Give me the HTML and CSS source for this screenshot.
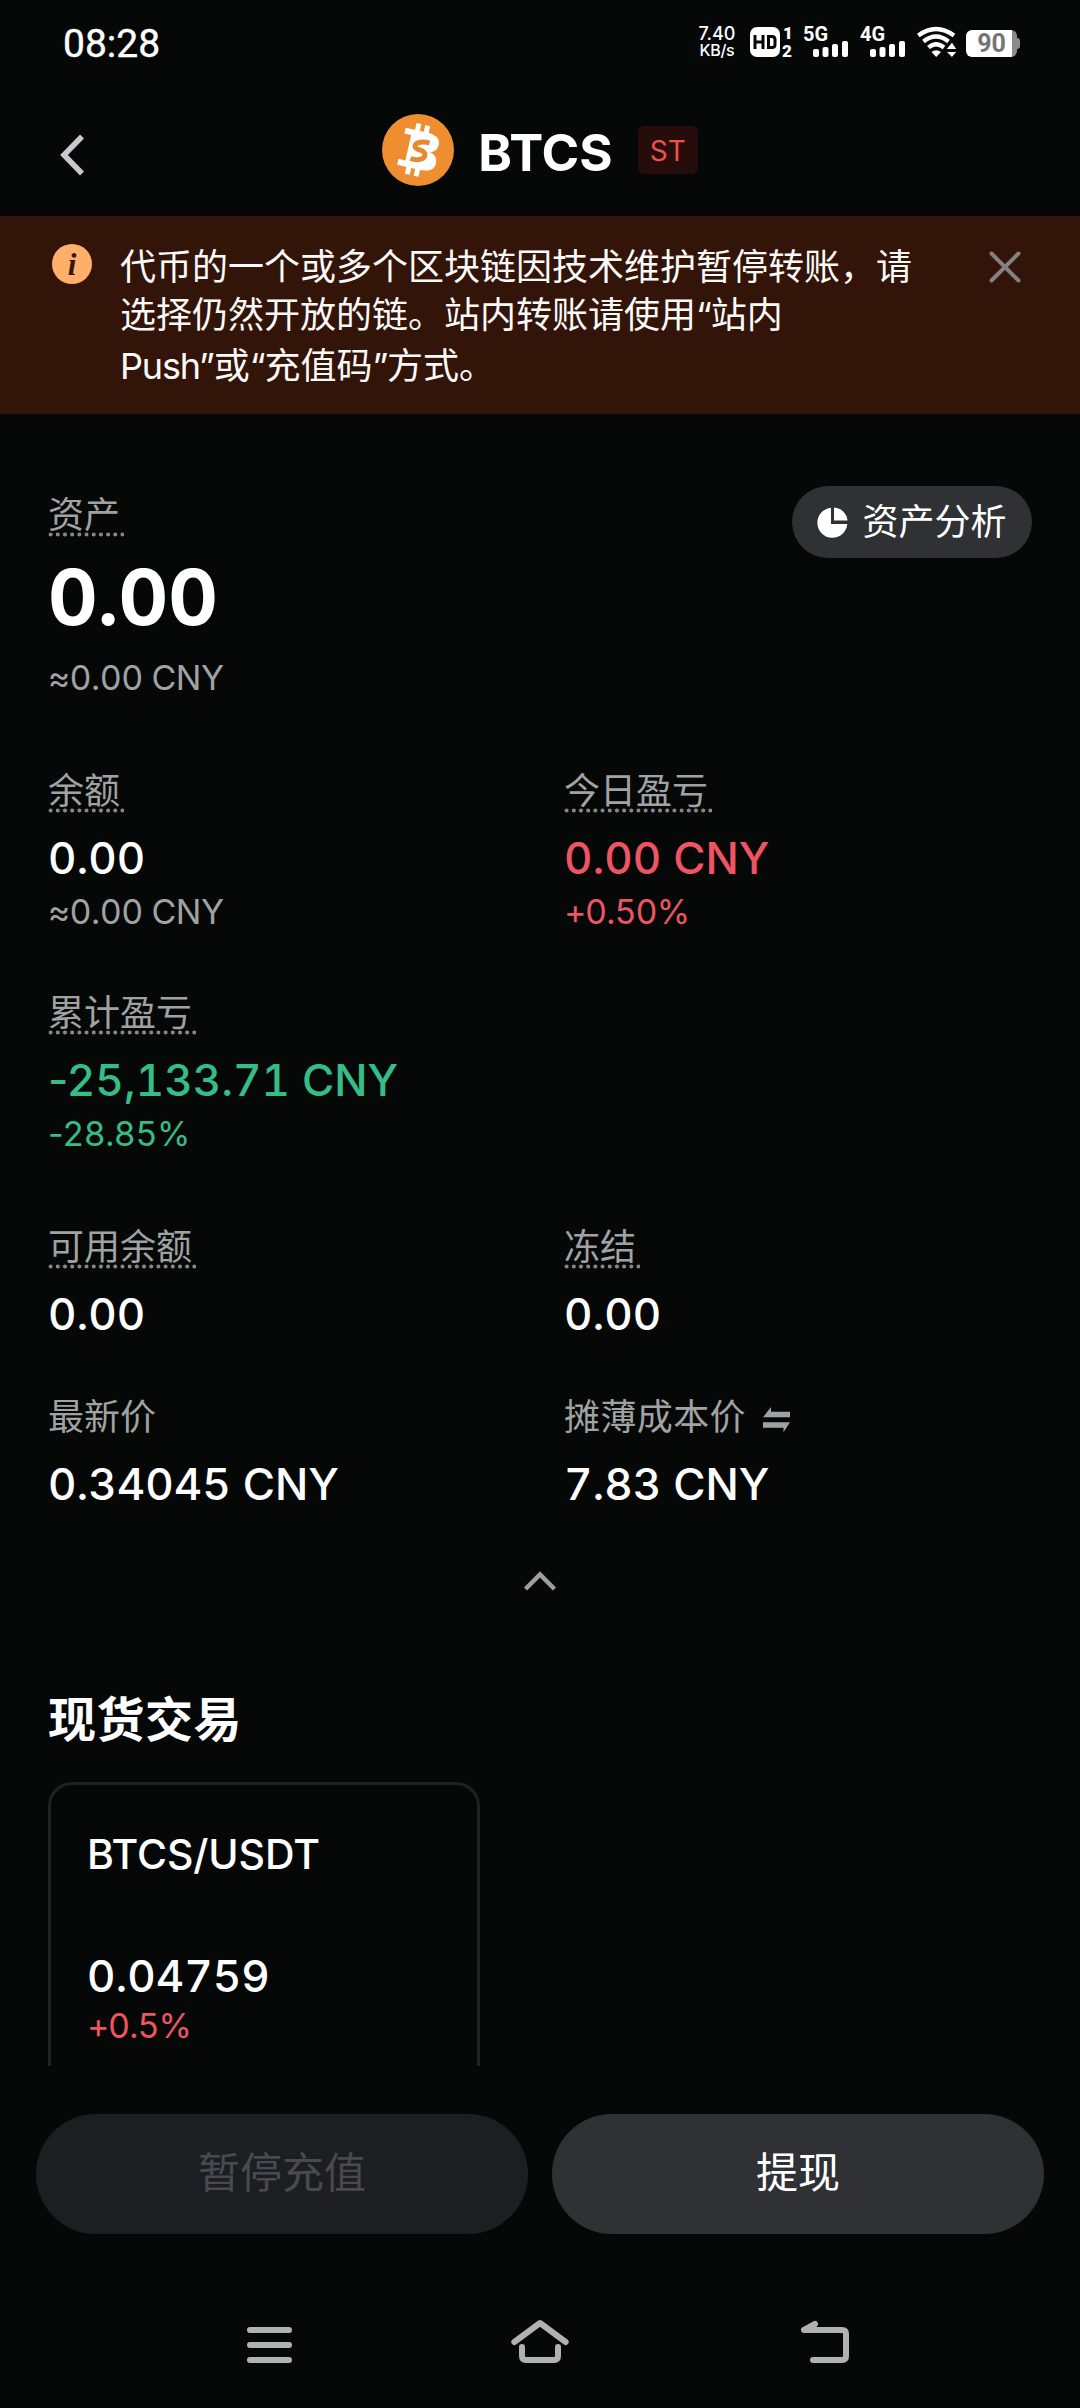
FILE: index.html
```html
<!DOCTYPE html>
<html lang="zh-CN">
<head>
<meta charset="utf-8">
<title>BTCS</title>
<link rel="stylesheet" href="styles.css">
</head>
<body>
<div class="screen">
  <div class="status">
    <span class="clock">08:28</span>
    <div class="status-icons">
      <div class="speed"><span>7.40</span><span>KB/s</span></div>
      <svg class="hd" width="43" height="32" viewBox="0 0 43 32">
        <rect x="0" y="1" width="30" height="30" rx="7" fill="#fff"/>
        <g fill="none" stroke="#050807" stroke-width="3"><path d="M5 9v14M13 9v14M5 16h8M18.500 10.500h3.500q3 0 3 3v5q0 3-3 3h-3.500z"/></g>
        <text x="33" y="13" class="sim">1</text><text x="32" y="31" class="sim">2</text>
      </svg>
      <svg class="cell-5g" width="45" height="32" viewBox="0 0 45 32">
        <text x="-1" y="15" class="net">5G</text>
        <g fill="#fff"><rect x="9" y="23" width="6" height="8" rx="2"/><rect x="18.500" y="21" width="6" height="10" rx="2"/><rect x="28" y="18" width="6" height="13" rx="2"/><rect x="38" y="15" width="6" height="16" rx="2"/></g>
      </svg>
      <svg class="cell-4g" width="45" height="32" viewBox="0 0 45 32">
        <text x="-1" y="15" class="net">4G</text>
        <g fill="#fff"><rect x="9" y="23" width="6" height="8" rx="2"/><rect x="18.500" y="21" width="6" height="10" rx="2"/><rect x="28" y="18" width="6" height="13" rx="2"/><rect x="38" y="15" width="6" height="16" rx="2"/></g>
      </svg>
      <svg class="wifi" width="39" height="32" viewBox="0 0 39 32">
        <g fill="none" stroke="#fff" stroke-width="4.200"><path d="M1.300 9.500Q19 -3.500 37 9.500M6.500 15.500Q19 5.500 31.500 15.500M11.500 21.500Q19 15 27 21.500"/></g>
        <path d="M14.500 26q4.500-3.500 9.500 0l-4.800 5z" fill="#fff"/>
        <path d="M29 23.500l6-7.500 5 7.500zM29 25.500h11L35 31.500z" fill="#fff" stroke="#050807" stroke-width="1"/>
      </svg>
      <div class="battery"><span class="level">90</span><i class="cap"></i></div>
    </div>
  </div>

  <header class="header">
    <svg class="back" width="26" height="42" viewBox="0 0 26 42"><path d="M22 2.500L4 21l18 18.500" fill="none" stroke="#c9c9cb" stroke-width="5.500"/></svg>
    <div class="title">
      <svg width="72" height="72" viewBox="0 0 72 72">
        <circle cx="36" cy="36" r="36" fill="#ee8e31"/>
        <g transform="rotate(13 36 36)">
          <path d="M19 17h22c9 0 14 3 14 9.500 0 5-2.500 7.500-6.500 9 5 1 8 4.500 8 9.500 0 7-6 10-15 10H19v-6h7V23h-7z" fill="#fff"/>
          <path d="M31 10v9M40 10v9M31 53v9M40 53v9" stroke="#fff" stroke-width="5"/>
        </g>
        <path d="M47.500 29c-6-2-14.500-1-14.500 3.500 0 4 10 3 10 8s-8 6.500-14.500 4" fill="none" stroke="#e58a2e" stroke-width="5"/>
      </svg>
      <h1>BTCS</h1>
      <span class="tag">ST</span>
    </div>
  </header>

  <div class="notice">
    <svg class="info" width="40" height="40" viewBox="0 0 40 40"><circle cx="20" cy="20" r="20" fill="#ffae6c"/><text x="20" y="30.500" text-anchor="middle" class="info-i">i</text></svg>
    <p>
      <span class="line">代币的一个或多个区块链因技术维护暂停转账，请</span>
      <span class="line">选择仍然开放的链。站内转账请使用<span class="latin">“</span>站内</span>
      <span class="line line-latin"><span class="latin">Push”</span>或<span class="latin">“</span>充值码<span class="latin">”</span>方式。</span>
    </p>
    <svg class="close" width="32" height="32" viewBox="0 0 32 32"><path d="M2.500 2.500l27 27M29.500 2.500l-27 27" stroke="#85817f" stroke-width="4" stroke-linecap="round"/></svg>
  </div>

  <main class="content">
    <section class="overview">
      <div class="total">
        <span class="label dotted">资产</span>
        <strong class="amount">0.00</strong>
        <span class="sub">≈0.00 CNY</span>
      </div>
      <button class="analysis">
        <svg width="31" height="31" viewBox="0 0 31 31"><path d="M14 0.800A15 15 0 1 0 30.300 17H14z" fill="#fff"/><path d="M17 0.500A14.500 14.500 0 0 1 30.500 13.500H17z" fill="#fff"/></svg>
        <span>资产分析</span>
      </button>
    </section>

    <section class="grid">
      <div class="cell"><span class="label dotted">余额</span><span class="value">0.00</span><span class="sub">≈0.00 CNY</span></div>
      <div class="cell down"><span class="label dotted">今日盈亏</span><span class="value">0.00 CNY</span><span class="sub"><span class="sign">+</span>0.50%</span></div>
      <div class="cell up"><span class="label dotted">累计盈亏</span><span class="value"><span class="sign">-</span>25,133.71 CNY</span><span class="sub"><span class="sign">-</span>28.85%</span></div>
      <div class="cell"></div>
      <div class="cell"><span class="label dotted">可用余额</span><span class="value">0.00</span></div>
      <div class="cell"><span class="label dotted">冻结</span><span class="value">0.00</span></div>
      <div class="cell"><span class="label">最新价</span><span class="value">0.34045 CNY</span></div>
      <div class="cell"><span class="label wide">摊薄成本价
        <svg class="swap" width="28" height="26" viewBox="0 0 28 26"><path d="M8 0v4.700h19v5.600H0zM0 15.300h27L20.500 25.300v-4.600H0z" fill="#a1a2a3"/></svg></span><span class="value">7.83 CNY</span></div>
    </section>

    <div class="fold"><svg width="34" height="22" viewBox="0 0 34 22"><path d="M2.500 19L17 4.500 31.500 19" fill="none" stroke="#9d9e9f" stroke-width="4.500"/></svg></div>

    <section class="spot">
      <h2>现货交易</h2>
      <div class="card">
        <span class="pair">BTCS/USDT</span>
        <span class="value">0.04759</span>
        <span class="sub"><span class="sign">+</span>0.5%</span>
      </div>
    </section>
  </main>

  <footer class="actions">
    <button class="btn disabled">暂停充值</button>
    <button class="btn">提现</button>
  </footer>

  <nav class="nav">
    <svg class="menu" width="46" height="38" viewBox="0 0 46 38"><path d="M3 4h39M3 19h39M3 34h39" stroke="#b0b1b0" stroke-width="6" stroke-linecap="round"/></svg>
    <svg class="home" width="58" height="46" viewBox="0 0 58 46"><path d="M3.300 24L29 5 54.700 24M11 29v9q0 4 4 4h28q4 0 4-4V29" fill="none" stroke="#b0b1b0" stroke-width="6" stroke-linecap="round" stroke-linejoin="round"/></svg>
    <svg class="return" width="50" height="46" viewBox="0 0 50 46"><path d="M15 6L4 12h38q4 0 4 4v22q0 4-4 4H13" fill="none" stroke="#b0b1b0" stroke-width="6" stroke-linecap="round" stroke-linejoin="round"/></svg>
  </nav>
</div>
</body>
</html>
```

FILE: styles.css
```css
* { box-sizing: border-box; }
body {
  margin: 0;
  background: #050807;
  color: #fff;
  font-family: Inter, "Noto Sans CJK SC", sans-serif;
}
h1, h2, p { margin: 0; }
button { border: 0; padding: 0; color: #fff; font-family: inherit; }
svg { display: block; flex: none; overflow: visible; }

.screen {
  width: 1080px;
  height: 2408px;
  display: flex;
  flex-direction: column;
  overflow: hidden;
}

.status {
  height: 88px;
  padding: 0 60px 0 63px;
  display: flex;
  align-items: flex-start;
  justify-content: space-between;
}
.clock { font: 400 39px/88px Roboto, sans-serif; -webkit-text-stroke: 0.4px #fff; }
.status-icons { display: flex; align-items: center; height: 84px; }
.speed {
  display: flex;
  flex-direction: column;
  align-items: center;
  width: 38px;
  font: 500 18px/17px Inter, sans-serif;
}
.speed span { white-space: nowrap; }
.speed span:last-child { font-size: 16px; letter-spacing: -0.3px; }
.hd { margin-left: 14px; }
.cell-5g { margin-left: 11px; }
.cell-4g { margin-left: 12px; }
.wifi { margin: 0 10px 0 11px; }
.sim { font: 900 17px Roboto, sans-serif; fill: #fff; }
.net { font: 700 20px Roboto, sans-serif; fill: #fff; }
.battery {
  width: 54px;
  margin-top: 3px;
  display: flex;
  align-items: center;
}
.level {
  width: 51px;
  height: 27px;
  border-radius: 6px;
  background: linear-gradient(90deg, #fff 90%, #8b8b8b 90%);
  color: #747474;
  font: 700 25px/28px Roboto, sans-serif;
  text-align: center;
}
.cap { width: 3px; height: 11px; border-radius: 0 3px 3px 0; background: #8b8b8b; }

.header {
  height: 128px;
  display: grid;
  grid-template-columns: 60px 1fr 60px;
  padding: 0 0 4px;
  align-items: center;
}
.back { margin: 9px 0 0 60px; }
.title { display: flex; align-items: center; justify-content: center; }
.title h1 { margin: 6px 25px 0 24px; font-size: 51px; line-height: 72px; font-weight: 700; }
.tag {
  width: 60px;
  height: 48px;
  border-radius: 6px;
  background: #260c0a;
  color: #ee5148;
  font-size: 28px;
  line-height: 50px;
  text-align: center;
}

.notice {
  height: 198px;
  padding: 27px 59px 0 52px;
  display: flex;
  background: #331409;
}
.info { margin-top: 1px; }
.info-i { font: italic 700 31px "Liberation Serif", serif; fill: #331409; }
.notice p { flex: 1; margin-left: 28px; font-size: 36px; color: #fcfaf8; white-space: nowrap; }
.line { display: block; line-height: 48px; }
.line-latin { line-height: 54px; }
.latin { letter-spacing: -1.2px; }
.close { margin-top: 8px; }

.content { height: 1652px; padding: 72px 48px 0; overflow: hidden; }
.overview { height: 283px; display: flex; justify-content: space-between; align-items: flex-start; }
.total { display: flex; flex-direction: column; align-items: flex-start; padding-top: 7px; }
.label { height: 44px; color: #a1a2a3; font-size: 36px; line-height: 45px; display: flex; }
.wide { letter-spacing: 0.4px; }
.dotted {
  padding-right: 4px;
  background: radial-gradient(circle, #858788 1.700px, transparent 2.300px) -1px 100% / 7.200px 5px repeat-x;
}
.amount { font-size: 77px; line-height: 80px; margin-top: 20px; font-weight: 700; }
.sub { margin-top: 8px; font-size: 34px; line-height: 42px; letter-spacing: -0.5px; color: #a1a2a3; white-space: nowrap; }
.total .sub { margin-top: 20px; }
.analysis {
  width: 240px;
  height: 72px;
  border-radius: 36px;
  background: #303134;
  display: flex;
  align-items: center;
  justify-content: center;
  gap: 14px;
  font-size: 36px;
}
.analysis span { margin-top: -6px; }

.grid { display: grid; grid-template-columns: 516px 1fr; grid-template-rows: 222px 234px 170px 155px; }
.cell { display: flex; flex-direction: column; align-items: flex-start; }
.value { margin-top: 18px; font-size: 44px; line-height: 54px; font-weight: 500; white-space: nowrap; }
.value, .sub, .amount { font-feature-settings: "tnum"; }
.cell .sub { margin-top: 6px; }
.sign { font-feature-settings: normal; letter-spacing: -1.500px; }
.down .value, .down .sub { color: #ee5463; }
.down .sub { letter-spacing: -0.9px; }
.up .value, .up .sub { color: #35bd88; }
.swap { margin: 12px 0 0 17px; }
.fold { display: flex; justify-content: center; padding-top: 20px; }

.spot h2 { font-size: 48px; line-height: 60px; letter-spacing: 0.500px; margin-top: 98px; font-weight: 700; }
.card {
  width: 432px;
  height: 320px;
  margin-top: 32px;
  border: 3px solid #202222;
  border-radius: 24px;
  padding: 44px 36px;
  display: flex;
  flex-direction: column;
}
.pair { font-size: 41px; line-height: 50px; letter-spacing: -0.1px; font-weight: 500; }
.card .value { margin-top: 70px; }
.card .sub { margin-top: 2px; color: #ee5463; letter-spacing: -0.9px; }

.actions { height: 168px; padding: 48px 36px 0; display: flex; gap: 24px; }
.btn { flex: 1; height: 120px; padding-bottom: 9px; border-radius: 60px; background: #303134; font-size: 42px; }
.disabled { background: #1d1e22; color: #484a4f; }

.nav { flex: 1; display: flex; align-items: flex-start; padding: 84px 0 0 247px; }
.menu { margin-top: 8px; }
.home { margin-left: 218px; }
.return { margin-left: 231px; }
```
